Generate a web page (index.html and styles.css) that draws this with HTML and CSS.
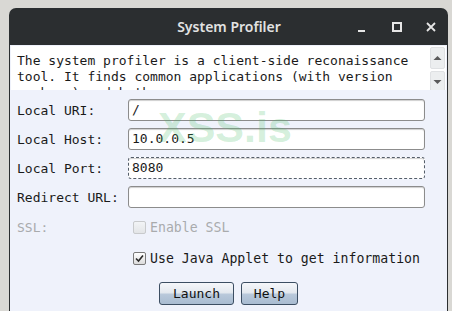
FILE: index.html
```html
<!DOCTYPE html>
<html>
<head>
<meta charset="utf-8">
<link rel="stylesheet" href="styles.css">
</head>
<body>
<div class="window">
  <div class="titlebar">
    <div class="title">System Profiler</div>
    <div class="controls">
      <span class="ctl min"><svg width="12" height="12" viewBox="0 0 12 12"><rect x="1" y="9" width="7" height="2" fill="#e6e6e6"/></svg></span>
      <span class="ctl max"><svg width="12" height="12" viewBox="0 0 12 12"><rect x="2" y="2" width="8" height="8" fill="none" stroke="#e6e6e6" stroke-width="2"/></svg></span>
      <span class="ctl close"><svg width="12" height="12" viewBox="0 0 12 12"><path d="M2 2 L10 10 M10 2 L2 10" stroke="#e6e6e6" stroke-width="1.8"/></svg></span>
    </div>
  </div>
  <div class="content">
    <div class="desc">
      <div class="desc-text">The system profiler is a client-side reconaissance<br>tool. It finds common applications (with version<br>numbers) and both</div>
      <div class="scroll">
        <div class="sbtn"><svg width="9" height="6" viewBox="0 0 9 6"><path d="M0.5 5 L4.5 1 L8.5 5 Z" fill="#5a5a5a"/></svg></div>
        <div class="sbtn"><svg width="9" height="6" viewBox="0 0 9 6"><path d="M0.5 1 L4.5 5 L8.5 1 Z" fill="#5a5a5a"/></svg></div>
      </div>
    </div>
    <div class="form">
      <div class="row"><span class="label">Local URI:</span><span class="field">/</span></div>
      <div class="row"><span class="label">Local Host:</span><span class="field">10.0.0.5</span></div>
      <div class="row"><span class="label">Local Port:</span><span class="field focus">8080</span></div>
      <div class="row"><span class="label">Redirect URL:</span><span class="field"></span></div>
      <div class="row check disabled"><span class="label">SSL:</span><span class="cb"></span><span class="cbtext">Enable SSL</span></div>
      <div class="row check"><span class="label"></span><span class="cb on"><svg width="11" height="11" viewBox="0 0 11 11"><path d="M2 5.5 L4.5 8 L9 2.5" fill="none" stroke="#2a2a2a" stroke-width="1.6"/></svg></span><span class="cbtext">Use Java Applet to get information</span></div>
      <div class="buttons"><span class="btn launch">Launch</span><span class="btn help">Help</span></div>
      <div class="watermark">XSS.is</div>
    </div>
  </div>
</div>
</body>
</html>
```

FILE: styles.css
```css
html, body {
  margin: 0;
  padding: 0;
  background: #d9d8d4;
  height: 311px;
  overflow: hidden;
}
.window {
  margin: 8px 0 0 9px;
  width: 439px;
  height: 303px;
  background: #2b2e30;
  border-radius: 7px 7px 0 0;
  display: flex;
  flex-direction: column;
}
.titlebar {
  height: 37px;
  flex: none;
  position: relative;
  display: flex;
  align-items: center;
  justify-content: center;
}
.title {
  font-family: "Noto Sans", sans-serif;
  font-weight: 600;
  font-size: 14px;
  color: #e2e2e2;
  margin-left: 1px;
}
.controls {
  position: absolute;
  right: 0;
  top: 0;
  height: 37px;
  display: flex;
  align-items: center;
}
.ctl {
  width: 34px;
  display: flex;
  justify-content: center;
}
.content {
  flex: 1;
  margin: 0 1px;
  background: #eff2fb;
  display: flex;
  flex-direction: column;
  font-family: "DejaVu Sans Mono", monospace;
  font-size: 13px;
  color: #1a1a1a;
}
.desc {
  height: 44px;
  margin: 1px 1px 0 1px;
  background: #ffffff;
  display: flex;
  overflow: hidden;
}
.desc-text {
  flex: 1;
  padding: 7px 0 0 6px;
  line-height: 16px;
  white-space: nowrap;
  overflow: hidden;
}
.scroll {
  width: 15px;
  margin: 1px 1px 0 0;
  display: flex;
  flex-direction: column;
  gap: 2px;
}
.sbtn {
  height: 20px;
  flex: none;
  background: #eceeef;
  border: 1px solid #dfe1e3;
  border-radius: 2px;
  display: flex;
  align-items: center;
  justify-content: center;
}
.form {
  position: relative;
  padding: 9px 0 0 7px;
  display: flex;
  flex-direction: column;
  gap: 7px;
}
.watermark {
  position: absolute;
  z-index: 2;
  left: 148px;
  top: 13px;
  font-family: "Liberation Sans", Arial, sans-serif;
  font-weight: bold;
  font-size: 43px;
  line-height: 48px;
  color: rgba(70, 190, 100, 0.24);
  pointer-events: none;
}
.row {
  display: flex;
  align-items: center;
  height: 22px;
}
.label {
  width: 111px;
  flex: none;
}
.field {
  box-sizing: border-box;
  width: 297px;
  height: 22px;
  border: 1px solid #8c8c8c;
  border-radius: 3px;
  background: #ffffff;
  box-shadow: inset 0 1px 1px #cfcfcf;
  padding: 2px 0 0 3px;
  line-height: 16px;
}
.field.focus {
  border: 1px dashed #555e6a;
}
.row.check {
  height: 16px;
  margin-top: 4px;
}
.row.check + .row.check {
  margin-top: 8px;
}
.cbtext {
  font-size: 13.2px;
}
.disabled {
  color: #a9abad;
}
.cb {
  box-sizing: border-box;
  width: 13px;
  height: 13px;
  margin: 0 4px 0 5px;
  border: 1px solid #7a7a7a;
  border-radius: 2px;
  background: linear-gradient(#ffffff, #dcdcdc);
  display: flex;
  align-items: center;
  justify-content: center;
}
.disabled .cb {
  border-color: #c8cacc;
  background: linear-gradient(#f2f4f6, #e3e5e7);
}
.buttons {
  display: flex;
  justify-content: center;
  gap: 7px;
  margin-top: 9px;
  margin-left: -7px;
}
.btn {
  box-sizing: border-box;
  height: 23px;
  border: 1px solid #3c4e62;
  border-radius: 3px;
  background: linear-gradient(#f5f7fa 0%, #e4e9ef 45%, #b8c8da 55%, #a9bcd1 100%);
  display: flex;
  align-items: center;
  justify-content: center;
  color: #111;
}
.launch { width: 75px; }
.help { width: 57px; }
```
